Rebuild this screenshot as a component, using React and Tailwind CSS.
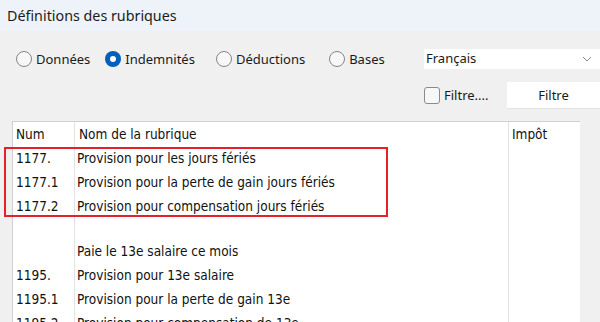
import React from "react";

const ui = { fontFamily: '"Noto Sans", "Open Sans", sans-serif' };
const tbl = { fontFamily: '"DejaVu Sans Condensed", "DejaVu Sans", Verdana, sans-serif' };

function Radio({ label, checked, gapAfter }) {
  return (
    <div className={`flex items-center ${gapAfter}`}>
      {checked ? (
        <div className="w-[16px] h-[16px] rounded-full bg-[#005fb8] flex items-center justify-center">
          <div className="w-[6px] h-[6px] rounded-full bg-white" />
        </div>
      ) : (
        <div className="w-[16px] h-[16px] rounded-full border border-[#858585] bg-[#f7f7f7]" />
      )}
      <span className="ml-[4px] text-[13px] text-[#1a1a1a] leading-[20px]">{label}</span>
    </div>
  );
}

const rows = [
  { num: "Num", name: "Nom de la rubrique", imp: "Impôt", header: true, h: "h-[23px]" },
  { num: "1177.", name: "Provision pour les jours fériés", h: "h-[24px]" },
  { num: "1177.1", name: "Provision pour la perte de gain jours fériés", h: "h-[24px]" },
  { num: "1177.2", name: "Provision pour compensation jours fériés", h: "h-[24px]" },
  { num: "", name: "", h: "h-[21px]" },
  { num: "", name: "Paie le 13e salaire ce mois", h: "h-[24px]" },
  { num: "1195.", name: "Provision pour 13e salaire", h: "h-[24px]" },
  { num: "1195.1", name: "Provision pour la perte de gain 13e", h: "h-[24px]" },
  { num: "1195.2", name: "Provision pour compensation de 13e", h: "h-[24px]" },
];

export default function App() {
  return (
    <div className="relative w-[600px] h-[322px] overflow-hidden bg-[#f0f0f0]" style={ui}>
      <div className="h-[31px] bg-[#eef3fa] flex items-center pl-[7px]">
        <span className="text-[14.3px] text-[#1b1b1b]">Définitions des rubriques</span>
      </div>

      <div className="flex pt-[18px]">
        <div className="w-[424px] pl-[16px] h-[20px] flex items-center">
          <Radio label="Données" gapAfter="mr-[15px]" />
          <Radio label="Indemnités" checked gapAfter="mr-[21px]" />
          <Radio label="Déductions" gapAfter="mr-[24px]" />
          <Radio label="Bases" gapAfter="" />
        </div>
        <div className="w-[176px] flex flex-col">
          <div className="h-[20px] bg-white flex items-center justify-between pl-[2px] pr-[8px]">
            <span className="text-[13px] text-[#1a1a1a]">Français</span>
            <svg width="10" height="6" viewBox="0 0 10 6">
              <path d="M1 1 L5 5 L9 1" fill="none" stroke="#8a8a8a" strokeWidth="1" />
            </svg>
          </div>
          <div className="mt-[13px] flex items-center">
            <div className="w-[16px] h-[17px] rounded-[3px] border border-[#8a8a8a] bg-[#f7f7f7]" />
            <span className="ml-[4px] text-[13px] text-[#1a1a1a]">Filtre....</span>
            <div className="ml-auto w-[93px] h-[27px] bg-white flex items-center justify-center border-b border-[#e3e3e3]">
              <span className="text-[13px] text-[#1a1a1a] pt-[1px]">Filtre</span>
            </div>
          </div>
        </div>
      </div>

      <div className="mt-[12px] ml-[12px] w-[568px] h-[220px] bg-white border-t border-l border-[#cfcfcf] font-stretch-condensed" style={tbl}>
        {rows.map((r, i) => (
          <div key={i} className={`flex ${r.h} text-[13.5px] text-[#111]`}>
            <div className="w-[62px] border-r border-[#e2e2e2] flex items-center pl-[3px] pt-[2px]">{r.num}</div>
            <div className={`w-[434px] border-r border-[#e2e2e2] flex items-center ${r.header ? "pl-[4px]" : "pl-[2px]"} pt-[2px]`}>{r.name}</div>
            <div className="flex-1 flex items-center pl-[3px] pt-[2px]">{r.imp || ""}</div>
          </div>
        ))}
      </div>

      <div className="absolute left-[4px] top-[147px] w-[384px] h-[70px] border-2 border-[#e5202b]" />
    </div>
  );
}
